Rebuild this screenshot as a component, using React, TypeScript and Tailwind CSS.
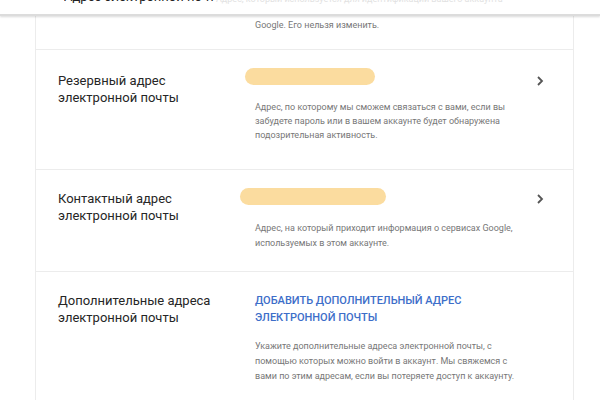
import React from "react";

const font = { fontFamily: "Roboto, 'Noto Sans', sans-serif" };

const Chevron = () => (
  <svg width="10" height="12" viewBox="0 0 10 12" className="text-[#555]">
    <path d="M3 2 L7 6 L3 10" fill="none" stroke="currentColor" strokeWidth="1.8" />
  </svg>
);

const Blob = ({ w, className }: { w: number; className: string }) => (
  <div className={`h-[17px] rounded-full bg-[#fbdc9f] ${className}`} style={{ width: w }} />
);

const Row = ({
  title,
  children,
  chevron,
  className,
}: {
  title: string[];
  children: React.ReactNode;
  chevron?: boolean;
  className: string;
}) => (
  <div className={`flex border-b border-[#ececec] pl-[22px] ${className}`}>
    <div className="w-[197px] shrink-0 text-[13px] leading-[17px] text-[#262626]">
      {title.map((t) => (
        <div key={t}>{t}</div>
      ))}
    </div>
    <div className="flex-1">{children}</div>
    {chevron && (
      <div className="w-[38px] shrink-0 pt-[3px]">
        <Chevron />
      </div>
    )}
  </div>
);

export default function App() {
  return (
    <div className="w-[600px] h-[400px] overflow-hidden bg-white" style={font}>
      {/* scrolled-away header, only its bottom edge shows */}
      <div className="h-[16px] overflow-hidden relative border-b-2 border-[#dcdcdc] shadow-[0_1px_2px_rgba(0,0,0,0.15)] z-10">
        <div className="absolute left-[64px] top-[-13px] w-[150px] overflow-hidden whitespace-nowrap text-[13px] text-[#222]">
          Адрес электронной почты
        </div>
        <div className="absolute left-[216px] top-[-7px] text-[9px] text-[#e2e2e2]">
          Адрес, который используется для идентификации вашего аккаунта
        </div>
      </div>
      <div className="mx-[35px] w-[539px] border-x border-[#ececec]">
        <div className="h-[34px] border-b border-[#ececec] pl-[219px] pt-[3px] text-[9px] text-[#777]">
          Google. Его нельзя изменить.
        </div>
        <Row title={["Резервный адрес", "электронной почты"]} chevron className="h-[120px] pt-[22px]">
          <Blob w={130} className="-ml-[10px] mt-[-4px]" />
          <div className="mt-[15px] text-[9px] leading-[14px] text-[#777]">
            <div>Адрес, по которому мы сможем связаться с вами, если вы</div>
            <div>забудете пароль или в вашем аккаунте будет обнаружена</div>
            <div>подозрительная активность.</div>
          </div>
        </Row>
        <Row title={["Контактный адрес", "электронной почты"]} chevron className="h-[102px] pt-[20px]">
          <Blob w={146} className="-ml-[15px] mt-[-2px]" />
          <div className="mt-[16px] text-[9px] leading-[15px] text-[#777]">
            <div>Адрес, на который приходит информация о сервисах Google,</div>
            <div>используемых в этом аккаунте.</div>
          </div>
        </Row>
        <Row title={["Дополнительные адреса", "электронной почты"]} className="h-[140px] pt-[20px]">
          <div className="text-[11px] leading-[17px] font-medium text-[#3d6ec9]">
            <div>ДОБАВИТЬ ДОПОЛНИТЕЛЬНЫЙ АДРЕС</div>
            <div>ЭЛЕКТРОННОЙ ПОЧТЫ</div>
          </div>
          <div className="mt-[13px] text-[9px] leading-[15px] text-[#777]">
            <div>Укажите дополнительные адреса электронной почты, с</div>
            <div>помощью которых можно войти в аккаунт. Мы свяжемся с</div>
            <div>вами по этим адресам, если вы потеряете доступ к аккаунту.</div>
          </div>
        </Row>
      </div>
    </div>
  );
}
